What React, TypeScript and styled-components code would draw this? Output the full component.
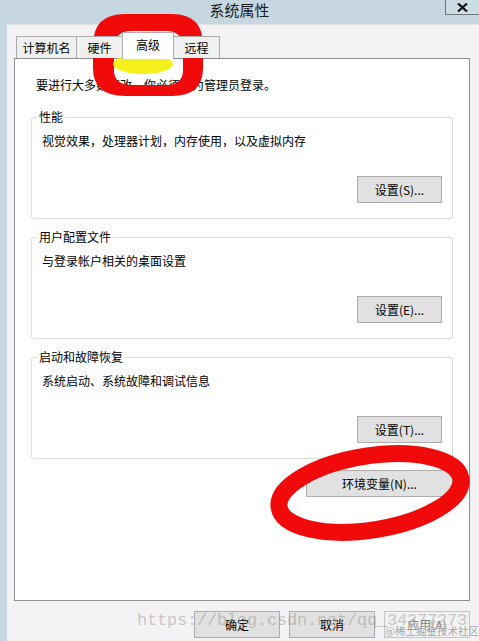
import React from 'react';
import styled, { createGlobalStyle } from 'styled-components';

const FONT = `"Noto Sans CJK SC", "Noto Sans", sans-serif`;

const GlobalStyle = createGlobalStyle`
  html, body {
    margin: 0;
    padding: 0;
    background: #c7d7e2;
  }
  body {
    font-family: ${FONT};
    font-size: 12px;
    color: #000;
  }
`;

const groups = [
  { title: '性能', desc: '视觉效果，处理器计划，内存使用，以及虚拟内存', button: '设置(S)...' },
  { title: '用户配置文件', desc: '与登录帐户相关的桌面设置', button: '设置(E)...' },
  { title: '启动和故障恢复', desc: '系统启动、系统故障和调试信息', button: '设置(T)...' },
];

const tabs = [
  { label: '计算机名', width: 61 },
  { label: '硬件', width: 47 },
  { label: '高级', width: 52, active: true },
  { label: '远程', width: 47 },
];

function App() {
  return (
    <>
      <GlobalStyle />
      <StWindow>
        <StTitleBar>
          <span />
          <StTitle>系统属性</StTitle>
          <StClose aria-label="关闭">
            <svg width="11" height="9" viewBox="0 0 11 9">
              <path d="M1 0.5 L10 8.5 M10 0.5 L1 8.5" stroke="#111" strokeWidth="2.2" />
            </svg>
          </StClose>
        </StTitleBar>

        <StBody>
          <StTabRow>
            {tabs.map((t) => (
              <StTab key={t.label} $width={t.width} $active={!!t.active}>
                {t.label}
              </StTab>
            ))}
          </StTabRow>

          <StPanel>
            <StIntro>要进行大多数更改，你必须作为管理员登录。</StIntro>
            {groups.map((g) => (
              <StGroup key={g.title}>
                <StLegend>{g.title}</StLegend>
                <StGroupInner>
                  <StDesc>{g.desc}</StDesc>
                  <StButtonRow>
                    <StButton $width={85}>{g.button}</StButton>
                  </StButtonRow>
                </StGroupInner>
              </StGroup>
            ))}
            <StEnvRow>
              <StButton $width={147}>环境变量(N)...</StButton>
            </StEnvRow>
          </StPanel>

          <StFooter>
            <StButton $width={86}>确定</StButton>
            <StButton $width={86}>取消</StButton>
            <StButton $width={86} disabled>
              应用(A)
            </StButton>
          </StFooter>
        </StBody>

        <StWatermark>https://blog.csdn.net/qq_34377273</StWatermark>
        <StBadge>@稀土掘金技术社区</StBadge>

        <StMarks width="479" height="641" viewBox="0 0 479 641">
          <path
            fillRule="evenodd"
            fill="#f00a0a"
            d="M125 14 H172 Q203 14 203 45 V68 Q203 96 172 96 H125 Q93 96 93 68 V45 Q93 14 125 14 Z
               M132 31 H166 Q183 31 183 48 V70 Q183 85 166 85 H132 Q114 85 114 70 V48 Q114 31 132 31 Z"
          />
          <ellipse cx="143" cy="64" rx="30" ry="10" fill="#f4f11c" />
          <ellipse
            cx="370"
            cy="493"
            rx="92"
            ry="37"
            transform="rotate(-9 370 493)"
            fill="none"
            stroke="#f00a0a"
            strokeWidth="17"
          />
        </StMarks>
      </StWindow>
    </>
  );
}

export default App;

const StWindow = styled.div`
  position: relative;
  width: 479px;
  height: 641px;
  overflow: hidden;
  background: #c7d7e2;
`;

const StTitleBar = styled.div`
  display: grid;
  grid-template-columns: 1fr auto 1fr;
  height: 24px;
`;

const StTitle = styled.div`
  font-size: 15px;
  line-height: 20px;
  color: #1a1a1a;
  padding-top: 0;
`;

const StClose = styled.div`
  justify-self: end;
  align-self: start;
  display: flex;
  align-items: center;
  justify-content: center;
  width: 34px;
  height: 15px;
  box-sizing: border-box;
  border: 1px solid #6f7479;
  border-top: none;
  border-right: none;
  background: #cddbe5;
`;

const StBody = styled.div`
  margin-left: 7px;
  height: 617px;
  box-sizing: border-box;
  padding: 8px 9px 0 7px;
  background: #f4f2f4;
  border-top: 1px solid #e2e2e6;
`;

const StTabRow = styled.div`
  display: flex;
  align-items: flex-end;
  height: 25px;
  padding-left: 2px;
`;

const StTab = styled.div<{ $width: number; $active: boolean }>`
  position: relative;
  display: flex;
  align-items: center;
  justify-content: center;
  box-sizing: border-box;
  width: ${(p) => p.$width}px;
  height: ${(p) => (p.$active ? 27 : 22)}px;
  margin-left: -1px;
  margin-bottom: ${(p) => (p.$active ? -1 : 0)}px;
  padding-bottom: ${(p) => (p.$active ? 2 : 0)}px;
  border: 1px solid #acacac;
  border-bottom: none;
  background: ${(p) => (p.$active ? '#fff' : '#f0f0f0')};
  z-index: ${(p) => (p.$active ? 2 : 1)};
  font-size: 12px;
  line-height: 14px;
  white-space: nowrap;
  &:first-child {
    margin-left: 0;
  }
`;

const StPanel = styled.div`
  width: 456px;
  height: 543px;
  box-sizing: border-box;
  padding: 19px 0 0 16px;
  border: 1px solid #8c8f94;
  background: #fff;
`;

const StIntro = styled.p`
  margin: 0 0 18px 5px;
  font-size: 12px;
  line-height: 14px;
  white-space: nowrap;
`;

const StGroup = styled.fieldset`
  width: 422px;
  box-sizing: border-box;
  margin: 0 0 11px 0;
  padding: 0;
  border: 1px solid #dcdcdc;
  border-radius: 3px;
  min-inline-size: 0;
`;

const StLegend = styled.legend`
  margin-left: 5px;
  padding: 0 2px;
  font-size: 12px;
  line-height: 14px;
`;

const StGroupInner = styled.div`
  padding: 10px 10px 15px 10px;
`;

const StDesc = styled.div`
  font-size: 12px;
  line-height: 14px;
  white-space: nowrap;
`;

const StButtonRow = styled.div`
  display: flex;
  justify-content: flex-end;
  margin-top: 28px;
`;

const StEnvRow = styled.div`
  display: flex;
  justify-content: flex-end;
  width: 422px;
  margin-top: 8px;
`;

const StButton = styled.button<{ $width: number }>`
  width: ${(p) => p.$width}px;
  height: 27px;
  padding: 0;
  box-sizing: border-box;
  border: 1px solid #adadad;
  border-radius: 0;
  background: #e1e1e1;
  color: #000;
  font-family: ${FONT};
  font-size: 12px;
  line-height: 14px;
  &:disabled {
    background: #f2f2f2;
    border-color: #c4c4c4;
    color: #7a7a7a;
  }
`;

const StFooter = styled.div`
  display: flex;
  justify-content: flex-end;
  gap: 9px;
  width: 456px;
  margin-top: 10px;
`;

const StWatermark = styled.div`
  position: absolute;
  left: 137px;
  top: 609px;
  font-family: "Liberation Mono", monospace;
  font-size: 17px;
  letter-spacing: -0.2px;
  line-height: 24px;
  color: rgba(140, 140, 140, 0.45);
  white-space: nowrap;
  pointer-events: none;
`;

const StBadge = styled.div`
  position: absolute;
  left: 385px;
  top: 624px;
  font-size: 10.5px;
  line-height: 14px;
  color: rgba(150, 150, 150, 0.9);
  text-shadow: 0 0 2px #fff;
  white-space: nowrap;
  pointer-events: none;
`;

const StMarks = styled.svg`
  position: absolute;
  left: 0;
  top: 0;
  pointer-events: none;
`;
